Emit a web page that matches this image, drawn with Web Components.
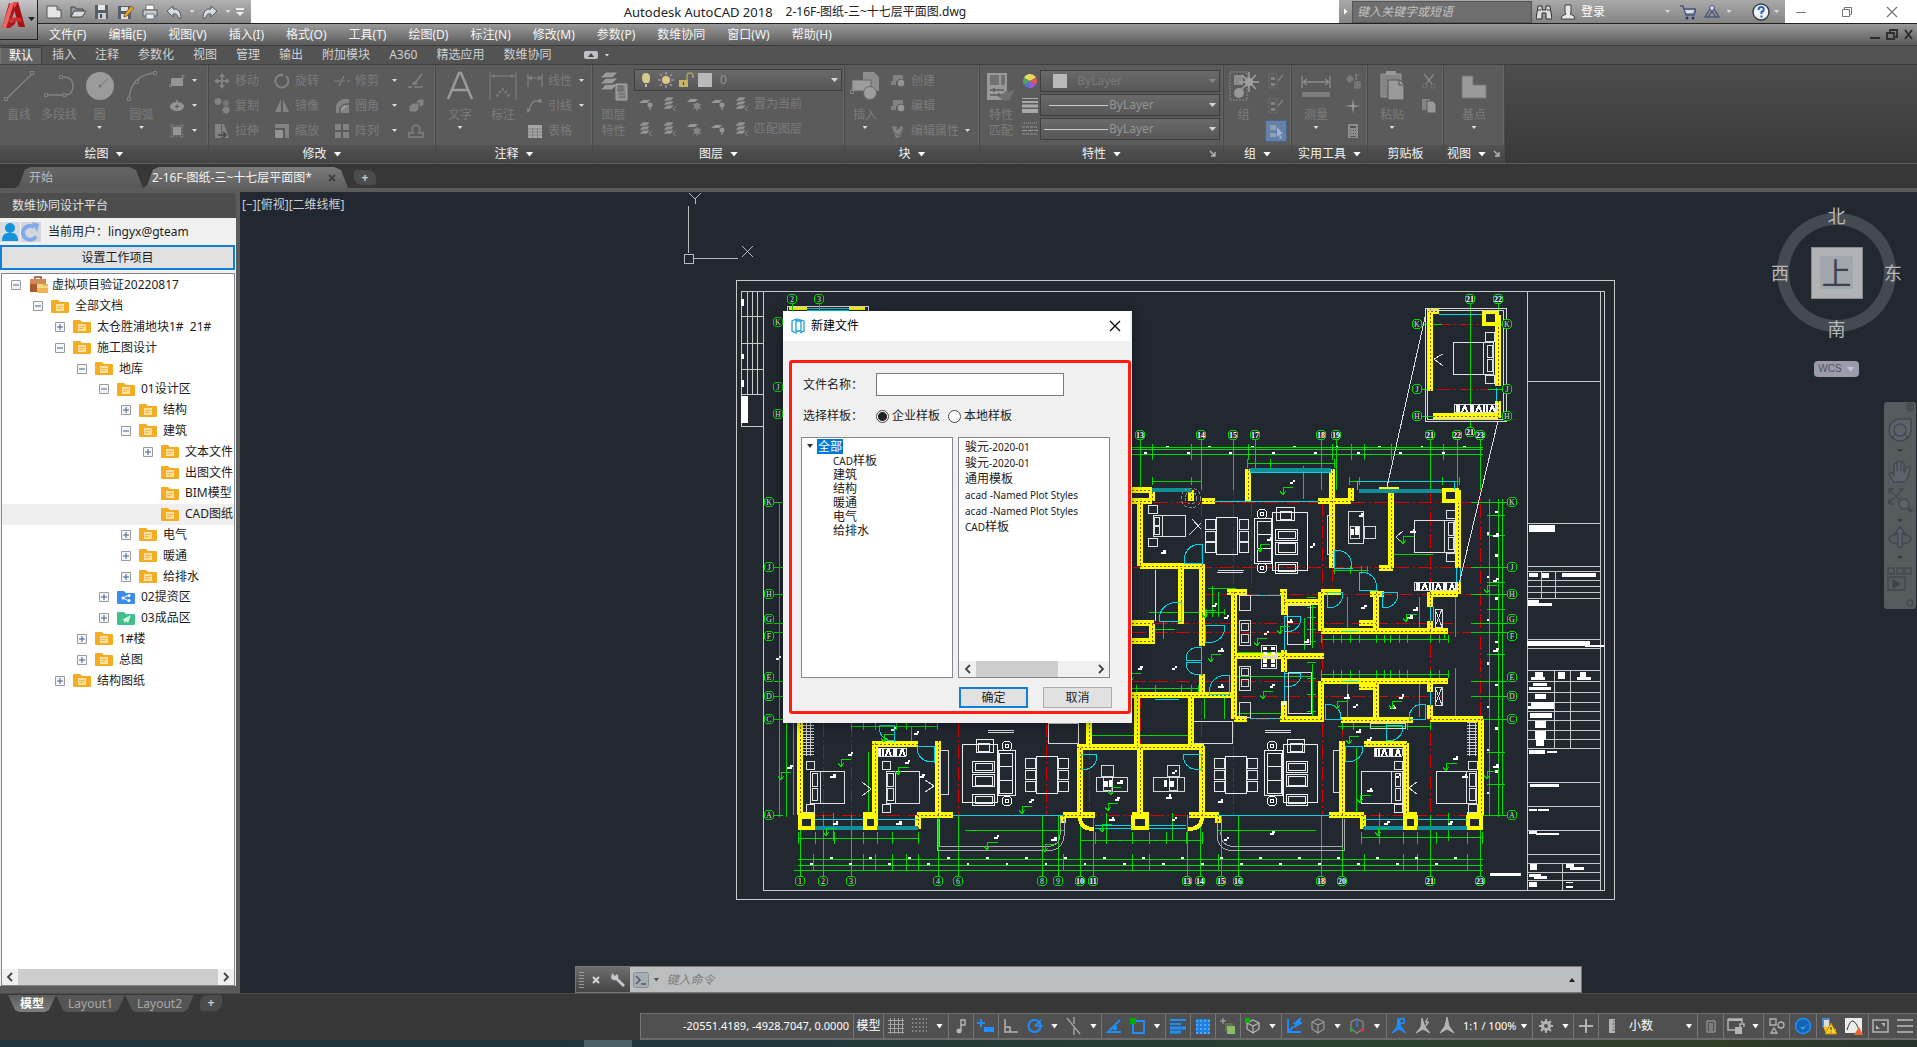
<!DOCTYPE html>
<html lang="zh-CN">
<head>
<meta charset="utf-8">
<title>Autodesk AutoCAD 2018</title>
<style>
html,body{margin:0;height:100%}
body{display:flex;flex-direction:column;height:100vh;overflow:hidden;background:#383838;color:#e4e4e4;
font:12px/16px "Noto Sans","Noto Sans CJK SC",sans-serif}
main{flex:1;min-height:0;display:flex}
</style>
</head>
<body>
<title-bar></title-bar>
<menu-bar></menu-bar>
<ribbon-bar></ribbon-bar>
<doc-tabs></doc-tabs>
<main>
<project-panel></project-panel>
<model-space>
<plan-drawing></plan-drawing>
<view-cube></view-cube>
<nav-bar></nav-bar>
<file-dialog heading="新建文件"></file-dialog>
<command-line></command-line>
</model-space>
</main>
<layout-tabs></layout-tabs>
<status-bar></status-bar>
<task-strip></task-strip>
<script>
const BASE = `*{box-sizing:border-box}
button,input,select{font:inherit;color:inherit;margin:0}
button{background:none;border:0;padding:0;display:flex;align-items:center;justify-content:center}
a{color:inherit;text-decoration:none}
ui-icon{flex:none}
.ar{width:5px;height:3px;background:#ddd;clip-path:polygon(0 0,100% 0,50% 100%);flex:none}
.AR{width:8px;height:5px;background:#fff;clip-path:polygon(0 0,100% 0,50% 100%);flex:none}`;
const define = (name, build) => customElements.define(name, class extends HTMLElement {
  constructor() { super(); this.attachShadow({ mode: 'open' }); }
  connectedCallback() { this.shadowRoot.innerHTML = build(this); }
});
const g = '#838383', b = '#1f8fff', w = '#b4b4b4';
const ICONS = {
  logo: [38, 39, `<path d="M9 3h9l-8 20 6-3-1 4-5 4H2z" fill="#b3171b"/><path d="M13 2h5l7 25h-7z" fill="#e04a48"/><path d="M18 2l7 25h-6L14 9z" fill="#a51216"/><path d="M6 18q9-1 15 0l1 4q-9-3-18 2z" fill="#cf2b2d"/><path d="M10 3h4L6 28H2z" fill="#e86a66"/><path d="M28 17h7l-3.500 4z" fill="#23272e"/>`],
  new: [16, 16, `<path d="M1 2h10l4 4v8H1z" fill="#e4e4e4" stroke="#555"/><path d="M11 2v4h4" fill="#aaa" stroke="#555"/>`],
  open: [16, 16, `<path d="M1 13V3h4l1 2h7v3" fill="#8f969c" stroke="#444"/><path d="M1 13l3-6h12l-4 6z" fill="#d7dbdf" stroke="#444"/>`],
  save: [16, 16, `<path d="M1 1h13v14H1z" fill="#555e6b"/><path d="M4 1h7v5H4z" fill="#e6e6e6"/><path d="M4 9h8v6H4z" fill="#ccc"/><path d="M6 10h2v4H6z" fill="#445"/>`],
  saveas: [16, 16, `<path d="M0 2h13v13H0z" fill="#555e6b"/><path d="M3 3h7v4H3zM3 10h7v5H3z" fill="#e0e0e0"/><path d="M6 11l7-9 3 2-7 8-3 1z" fill="#e5a52b" stroke="#6d4c12" stroke-width=".7"/>`],
  print: [16, 16, `<path d="M4 1h8v5H4z" fill="#fff" stroke="#777"/><path d="M1 6h14v6H1z" fill="#c9c9c9" stroke="#555"/><path d="M4 10h8v5H4z" fill="#dff1ff" stroke="#777"/>`],
  undo: [16, 16, `<path d="M1 7l6-5v3q8-1 8 9h-3q0-5-5-4v3z" fill="#d7dade" stroke="#505a66"/>`],
  redo: [16, 16, `<path d="M15 7L9 2v3Q1 4 1 14h3q0-5 5-4v3z" fill="#d7dade" stroke="#505a66"/>`],
  more: [10, 10, `<path d="M1 1h8v2H1zM1 5h8L5 9z" fill="#eee"/>`],
  bino: [16, 16, `<path d="M2 2h4v4h4V2h4l2 13h-6V9H6v6H0z" fill="#dcdcdc" stroke="#333"/><path d="M2 6h3M11 6h3" stroke="#333"/>`],
  person: [16, 16, `<path d="M5 1h6v6q0 3-1 3l4 2 1 3H1l1-3 4-2Q5 9 5 7z" fill="#e8e8e8" stroke="#444"/>`],
  cart: [16, 16, `<path d="M0 2h3l3 9h8l2-6H4" fill="none" stroke="#4a5580" stroke-width="1.500"/><path d="M5 6h9l-1 3H6z" fill="#d8def0"/><circle cx="7" cy="14" r="1.500" fill="#26366f"/><circle cx="13" cy="14" r="1.500" fill="#26366f"/>`],
  a360: [16, 16, `<circle cx="8" cy="4" r="2.500" fill="#dce" stroke="#4a5580"/><path d="M6 5L1 13h14L10 5M8 7l-4 6M8 7l4 6" fill="none" stroke="#4a5580" stroke-width="1.300"/>`],
  help: [18, 18, `<circle cx="9" cy="9" r="8" fill="#eef2fa" stroke="#3c4046" stroke-width="1.500"/><path d="M6.500 7q0-3 2.700-3t2.600 2.500Q11.800 8 9.500 9v2" fill="none" stroke="#2a5fc0" stroke-width="2"/><path d="M8.500 12.500h2v2h-2z" fill="#2a5fc0"/>`],
  min: [14, 14, `<path d="M2 7.500h10" stroke="#777"/>`],
  restore: [14, 14, `<path d="M2.500 4.500h7v7h-7zM4.500 4.500v-2h7v7h-2" fill="none" stroke="#777"/>`],
  close: [14, 14, `<path d="M2 2l10 10M12 2L2 12" stroke="currentColor" stroke-width="1.200"/>`],
  tabx: [8, 8, `<path d="M1 1l6 6M7 1L1 7" stroke="currentColor" stroke-width="1.800"/>`],
  mmin: [14, 14, `<path d="M2 9h10v2H2z" fill="#2e2e2e"/>`],
  mres: [14, 14, `<path d="M2 5h7v6H2zM5 4V2h7v7h-2" fill="none" stroke="#2e2e2e" stroke-width="1.800"/>`],
  mx: [14, 14, `<path d="M3 2l7 9M10 2L3 11" stroke="#2e2e2e" stroke-width="2"/>`],
  expand: [14, 8, `<rect width="14" height="8" rx="2" fill="#bdc1c7"/><path d="M4 6l3-4 3 4z" fill="#444"/>`],
  line: [30, 30, `<path d="M2 28L28 3" stroke="${g}" stroke-width="1.300"/><path d="M.5 26.500h3v3h-3zM26.500.5h3v3h-3z" fill="#5b5b5b" stroke="${g}"/>`],
  pline: [30, 30, `<path d="M2 24h20q7-1 7-9t-8-9h-4" fill="none" stroke="${g}" stroke-width="1.500"/><path d="M.5 22.500h3v3h-3zM19 22.500h3v3h-3zM15.500 4.500h3v3h-3z" fill="#5b5b5b" stroke="${g}"/>`],
  circle: [30, 30, `<circle cx="15" cy="15" r="14" fill="#9b9b9b"/><path d="M15 15l8-7" stroke="#777"/><circle cx="15" cy="15" r="1.500" fill="#777"/>`],
  arc: [30, 30, `<path d="M2 28Q4 4 28 2" fill="none" stroke="${g}" stroke-width="1.500"/><path d="M.5 26.500h3v3h-3zM8.500 9.500h3v3h-3zM26.500.5h3v3h-3z" fill="#5b5b5b" stroke="${g}"/>`],
  rect: [16, 16, `<path d="M2 5h12v8H2z" fill="#959595"/><path d="M.5 11.500h2v2h-2zM13 2.500h2v2h-2z" fill="none" stroke="${g}"/>`],
  ellipse: [16, 16, `<ellipse cx="8" cy="8.500" rx="7" ry="4.500" fill="#959595"/><path d="M6 8.500h4M8 6.500v4" stroke="#555"/><path d="M7 2h2v2H7z" fill="${g}"/>`],
  hatch: [16, 16, `<path d="M4 4h8v8H4z" fill="#959595"/><path d="M3 1v14M13 1v14M1 3h14M1 13h14" stroke="${g}" stroke-dasharray="2 1"/>`],
  move: [16, 16, `<path d="M8 0l3 4H9v3h3V5l4 3-4 3V9H9v3h2l-3 4-3-4h2V9H4v2L0 8l4-3v2h3V4H5z" fill="${g}"/>`],
  rotate: [16, 16, `<path d="M8 1.500a6.500 6.500 0 1 0 4 1.500" fill="none" stroke="${g}" stroke-width="2"/><path d="M7 0v4l3-2z" fill="${g}"/>`],
  trim: [16, 16, `<path d="M0 8h6M8 8h3M13 8h3M5 13l5-10" stroke="${g}" stroke-width="1.200"/>`],
  erase: [16, 16, `<path d="M0 14h4M6 14h9M14 1L7 10" stroke="${g}" stroke-width="1.500"/><path d="M8 8l-4 2 1 2 5-1z" fill="${g}"/>`],
  copy: [16, 16, `<circle cx="4" cy="3.500" r="3.500" fill="${g}"/><circle cx="12" cy="5" r="3" fill="#777"/><circle cx="12" cy="12" r="3.500" fill="${g}"/>`],
  mirror: [16, 16, `<path d="M7 1v13H1zM9 1v13h6z" fill="${g}"/>`],
  fillet: [16, 16, `<path d="M2 15V9q1-7 8-8h5v14z" fill="${g}"/><path d="M6 15V11q1-5 9-5" fill="#999" stroke="#5b5b5b" stroke-width="1.500"/>`],
  explode: [16, 16, `<path d="M1 8l4-3h6v6l-3 3H1zM8 4l3-3h5v6l-3 2" fill="${g}" stroke="#5b5b5b"/>`],
  stretch: [16, 16, `<path d="M1 1h6v14H1zM8 1h2l5 14H8z" fill="${g}"/><path d="M4 12h8M9 9l3 3-3 3" fill="none" stroke="#444" stroke-width="1.500"/>`],
  scale: [16, 16, `<path d="M1 1h14v14h-4V5H1z" fill="${g}"/><path d="M1 7h8v8H1z" fill="#959595"/>`],
  array: [16, 16, `<path d="M1 1h6v6H1zM9 1h6v6H9zM1 9h6v6H1zM9 9h6v6H9z" fill="${g}"/>`],
  offset: [16, 16, `<path d="M1 14h14v-4h-4q3-7-3-8-6 1-3 8H1z" fill="none" stroke="#787878" stroke-width="2"/>`],
  text: [30, 30, `<path d="M3 28L14 2h2l11 26M7 19h16" fill="none" stroke="#9a9a9a" stroke-width="2.500"/>`],
  dim: [30, 30, `<path d="M2 1v28M28 1v28M4 5h22" stroke="#787878" stroke-width="1.300"/><path d="M2 5l5-2v4zM28 5l-5-2v4z" fill="#787878"/><path d="M8 25l3-1M11 20l2 2M15 17v3M19 20l-2 2M22 25l-3-1" stroke="#787878" stroke-width="2"/>`],
  lin: [16, 16, `<path d="M1 1v13M15 1v13M2 5h12M5 3L2 5l3 2M11 3l3 2-3 2" fill="none" stroke="${g}" stroke-width="1.200"/>`],
  leader: [16, 16, `<path d="M1 14l4-9q1-2 4-2h3" fill="none" stroke="${g}" stroke-width="1.500"/><circle cx="13" cy="3" r="2" fill="${g}"/><path d="M0 15v-5l4 2z" fill="${g}"/>`],
  table: [16, 16, `<path d="M1 2h14v13H1z" fill="#a5a5a5"/><path d="M1 6h14M1 9h14M1 12h14M5.500 5v10M10.500 5v10" stroke="#777" stroke-width=".7"/>`],
  layers: [30, 30, `<path d="M7 1h12l-6 6H1zM7 7h12l-6 6H1zM7 13h12l-6 6H1z" fill="#9a9a9a" stroke="#5b5b5b"/><path d="M17 13h11v16H17z" fill="#8d8d8d" stroke="#aaa"/><path d="M19 15h5v5h-5zM20 23h6M20 26h6" fill="#777" stroke="#666"/>`],
  bulb: [16, 16, `<path d="M4 6q0-5 4-5t4 5-2 5H6Q4 9 4 6z" fill="#d8cb89"/><path d="M7 12h2v3H7z" fill="#bbb"/>`],
  sun: [16, 16, `<circle cx="8" cy="8" r="4" fill="#d8c88c"/><path d="M8 0v3M8 13v3M0 8h3M13 8h3M2 2l2 2M12 12l2 2M14 2l-2 2M4 12l-2 2" stroke="#999" stroke-width="1.500"/>`],
  lock: [16, 16, `<path d="M1 8h9v7H1z" fill="#c9b566"/><path d="M9 8V4q0-3 3-3t3 3v2" fill="none" stroke="#aaa266" stroke-width="1.500"/><path d="M5 10h1v3H5z" fill="#444"/>`],
  l1: [16, 16, `<path d="M5 4h7l-3 3H1z" fill="#999"/><circle cx="12" cy="9" r="2.500" fill="#959595"/><path d="M12 11v3" stroke="${g}" stroke-width="2"/>`],
  l2: [16, 16, `<path d="M5 1h7l-3 4H1zM5 5h7l-3 4H1zM5 9h7l-3 4H1z" fill="#949494" stroke="#5b5b5b" stroke-width=".6"/><path d="M14 10l-3 3 3 2" fill="none" stroke="${g}"/>`],
  l3: [16, 16, `<path d="M4 3h8L9 6H1z" fill="#999"/><circle cx="11" cy="10" r="3" fill="#8d8d8d"/><path d="M11 6v9M7 8l8 5M15 8l-8 5" stroke="${g}" stroke-width="1.200"/>`],
  insert: [30, 30, `<path d="M13 1h11l5 5v14H13z" fill="#8d8d8d"/><path d="M2 9h19v11H2z" fill="#9d9d9d" stroke="#666"/><circle cx="20" cy="22" r="6.500" fill="#9d9d9d" stroke="#666"/><path d="M.5 19.500h3v3h-3z" fill="none" stroke="${g}"/>`],
  blk: [16, 16, `<path d="M3 2h10v6H3zM1 8h5v4H1z" fill="${g}"/><circle cx="11" cy="10" r="4" fill="#959595" stroke="#5b5b5b"/>`],
  attr: [16, 16, `<path d="M2 3l5 1-1 3 3-1 1-3 4 2-4 9-4 1z" fill="${g}"/><path d="M5 10l4 3 5-9" stroke="#5b5b5b" fill="none"/>`],
  props: [30, 30, `<path d="M1 2h20v27H1z" fill="#999"/><path d="M4 4h9v10H4zM15 4h4v10h-4z" fill="#717171"/><path d="M4 19h14M4 24h14M8 17v4M13 22v4" stroke="#5c5c5c" stroke-width="1.500"/><path d="M13 26l8-7 2 2 6-3-5 11-6 1z" fill="#707070"/>`],
  wheel: [16, 16, `<path d="M8 8V1a7 7 0 0 1 6 3.500z" fill="#e8d65a"/><path d="M8 8l6-3.500a7 7 0 0 1 0 7z" fill="#e2584a"/><path d="M8 8l6 3.500A7 7 0 0 1 8 15z" fill="#9f5bd0"/><path d="M8 8v7a7 7 0 0 1-6-3.500z" fill="#4f73d8"/><path d="M8 8l-6 3.500a7 7 0 0 1 0-7z" fill="#52a94f"/><path d="M8 8L2 4.500A7 7 0 0 1 8 1z" fill="#dfe06a"/>`],
  lweight: [16, 16, `<path d="M0 1.500h16" stroke="#aaa"/><path d="M0 5h16" stroke="#aaa" stroke-width="2"/><path d="M0 9h16" stroke="#aaa" stroke-width="3"/><path d="M0 14h16" stroke="#aaa" stroke-width="4"/>`],
  ltype: [16, 16, `<path d="M0 2h16" stroke="#999" stroke-dasharray="1 1"/><path d="M0 6h16M0 13h16" stroke="#999" stroke-dasharray="3 1"/><path d="M0 9.500h16" stroke="#999" stroke-dasharray="5 1"/>`],
  group: [30, 30, `<path d="M1 1h17v28H1z" fill="none" stroke="#888" stroke-dasharray="2 1"/><path d="M5 4h9v10H5z" fill="#8c8c8c"/><circle cx="10" cy="22" r="5" fill="#999"/><path d="M20 1v20M10 11h20M13 4l14 14M27 4L13 18" stroke="#a0a0a0" stroke-width="1.500"/><circle cx="20" cy="11" r="4" fill="#a0a0a0"/>`],
  ung: [16, 16, `<path d="M1 1h8v14H1z" fill="none" stroke="#747474" stroke-dasharray="2 1"/><path d="M3 4h4v3H3zM3 10h4v3H3z" fill="${g}"/><path d="M15 2l-5 6" stroke="${g}" stroke-width="1.500"/>`],
  gsel: [20, 20, `<path d="M4 4h6v5H4zM4 12h6v4H4z" fill="#8f9fb8"/><path d="M11 6l6 7h-3l2 4-2 1-1-4-2 2z" fill="#a5b3c8"/>`],
  measure: [30, 30, `<path d="M1 5v12M29 5v12M2 11h26M6 8l-4 3 4 3M24 8l4 3-4 3" fill="none" stroke="#8c8c8c" stroke-width="1.300"/><path d="M1 21h28v5H1z" fill="#7d7d7d"/>`],
  qs: [16, 16, `<path d="M1 6h8M5 2v8M11 1v6M10 2h4M10 9h5v6h-5zM3 4h4v4H3zM10 12h5M12.500 9v6" fill="none" stroke="${g}" stroke-width="1.200"/>`],
  pt: [16, 16, `<path d="M8 0l1 7 7 1-7 1-1 7-1-7-7-1 7-1z" fill="#999"/>`],
  calc: [16, 16, `<path d="M3 1h10v14H3z" fill="#8d8d8d"/><path d="M5 3h6v2H5zM5 7h1v1H5zM8 7h1v1H8zM10 7h1v1h-1zM5 10h1v1H5zM8 10h1v1H8zM10 10h1v1h-1zM5 13h6v1H5z" fill="#555"/>`],
  paste: [30, 30, `<path d="M4 3h20v23H4z" fill="#858585" stroke="#999"/><path d="M9 0h10v4H9z" fill="#999"/><path d="M11 9h12l4 4v16H11z" fill="#9a9a9a" stroke="#555"/><path d="M22 9v5h5" fill="none" stroke="#555"/>`],
  cut: [16, 16, `<path d="M3 1l8 10M13 1L5 11" stroke="${g}" stroke-width="1.500"/><circle cx="4" cy="13" r="2" fill="none" stroke="#6c6c6c" stroke-width="1.500"/><circle cx="12" cy="13" r="2" fill="none" stroke="#6c6c6c" stroke-width="1.500"/>`],
  cpy: [16, 16, `<path d="M1 1h8v11H1z" fill="#858585"/><path d="M6 3h6l3 3v9H6z" fill="#999" stroke="#5b5b5b"/>`],
  base: [30, 30, `<path d="M3 5h11v9h13v13H3z" fill="#9a9a9a" stroke="#777"/>`],
  launch: [8, 8, `<path d="M1 1l4 4M6 2v4H2" fill="none" stroke="#bbb" stroke-width="1.300"/>`],
  user: [20, 20, `<path d="M0 0h20v20H0z" fill="#d9dcdf"/><circle cx="10" cy="6" r="5" fill="#1493da"/><path d="M2 19q0-8 6-8h4q6 0 6 8z" fill="#1493da"/>`],
  refresh: [20, 20, `<path d="M0 0h20v20H0z" fill="#d3d6da"/><path d="M15 14.500A7 7 0 1 1 13 5" fill="none" stroke="#7fa9ea" stroke-width="4"/><path d="M11 0l7 2-2 8z" fill="#7fa9ea"/>`],
  plus: [10, 10, `<path d="M.5.5h9v9h-9z" fill="#f6f6f6" stroke="#9a9a9a"/><path d="M2 5h6M5 2v6" stroke="#3f5f9f"/>`],
  minus: [10, 10, `<path d="M.5.5h9v9h-9z" fill="#f6f6f6" stroke="#9a9a9a"/><path d="M2 5h6" stroke="#3f5f9f"/>`],
  folder: [18, 15, `<path d="M0 2q0-1 1-1h6l2 2h8q1 0 1 1v9q0 1-1 1H1q-1 0-1-1z" fill="#f4ad22"/><path d="M5 5h8v7H5z" fill="#fbe0a2"/><path d="M6 7.500h6M6 9.500h4" stroke="#f4b943"/>`],
  share: [18, 15, `<path d="M0 2q0-1 1-1h6l2 2h8q1 0 1 1v9q0 1-1 1H1q-1 0-1-1z" fill="#3c8bef"/><path d="M12 5L6 8l6 3" fill="none" stroke="#fff"/><circle cx="6" cy="8" r="1.500" fill="#fff"/><circle cx="12" cy="5.500" r="1.500" fill="#fff"/><circle cx="12" cy="10.500" r="1.500" fill="#fff"/>`],
  send: [18, 15, `<path d="M0 2q0-1 1-1h6l2 2h8q1 0 1 1v9q0 1-1 1H1q-1 0-1-1z" fill="#42c08c"/><path d="M5 9l9-5-3 8-2-2-2 2V9z" fill="#d9f5e8"/>`],
  bag: [20, 18, `<path d="M6 3V1h6v2" fill="none" stroke="#8a4b27" stroke-width="1.500"/><path d="M1 3h16v13H1z" fill="#a8592e"/><path d="M1 3h16v5H1z" fill="#d48a55"/><path d="M8 8h11v9H8z" fill="#f0b452"/><path d="M8 8h5l1 2h5v2H8z" fill="#fbd78e"/>`],
  left: [8, 10, `<path d="M6 1L2 5l4 4" fill="none" stroke="#444" stroke-width="1.800"/>`],
  right: [8, 10, `<path d="M2 1l4 4-4 4" fill="none" stroke="#444" stroke-width="1.800"/>`],
  dlg: [14, 16, `<path d="M1 3l4-2v14l-4-2zM5 3h5v10H5M6 1l7 2v10l-4 2" fill="none" stroke="#19a0d8" stroke-width="1.300"/>`],
  wrench: [16, 16, `<path d="M2 1l3 3 2-2q2 2 1 4l7 7-2 2-7-7Q3 9 1 6z" fill="#c4c8cc"/>`],
  prompt: [16, 16, `<rect x=".5" y=".5" width="15" height="15" rx="2" fill="#a7adb4" stroke="#878d94"/><path d="M3 4l4 4-4 4M8 12h5" fill="none" stroke="#4e5a68" stroke-width="1.500"/>`],
  grid: [16, 16, `<path d="M2.500 0v16M6.500 0v16M10.500 0v16M14.500 0v16M0 2.500h16M0 6.500h16M0 10.500h16M0 14.500h16" stroke="#a5a5a5"/>`],
  dots: [16, 16, `<path d="M1 1h15M1 5h15M1 9h15M1 13h15" stroke="#999" stroke-width="1.500" stroke-dasharray="1.500 2"/>`],
  snap: [16, 16, `<path d="M8 13V2h4v5H8" fill="none" stroke="${w}" stroke-width="1.500"/><circle cx="6" cy="13" r="2.500" fill="${w}"/>`],
  dyn: [18, 16, `<path d="M4 1v8M0 5h8" stroke="${b}" stroke-width="2"/><path d="M7 9h10v5H7z" fill="${b}"/>`],
  ortho: [16, 16, `<path d="M2 1v13h13M2 9h5v5" fill="none" stroke="${w}" stroke-width="1.500"/>`],
  polar: [16, 16, `<circle cx="7.500" cy="8" r="6" fill="none" stroke="${b}" stroke-width="2"/><path d="M8 8l6-6M8 8h8" stroke="${b}" stroke-width="1.500"/>`],
  iso: [16, 18, `<path d="M1 1l13 16M8 11v7M8 7V0" stroke="#a0a0a0" stroke-width="1.500"/>`],
  angle: [16, 16, `<path d="M14 2L2 14h13" fill="none" stroke="${b}" stroke-width="2"/><path d="M7 8h4v4H7z" fill="${b}"/>`],
  osnap: [18, 18, `<path d="M4 4h11v12H4z" fill="none" stroke="${b}" stroke-width="1.800"/><path d="M1 1h6v6H1z" fill="#0a0"/>`],
  lw: [16, 16, `<path d="M0 2h16M0 6h11" stroke="${b}" stroke-width="2"/><path d="M0 10h16M0 14h11" stroke="${b}" stroke-width="3"/>`],
  tr: [16, 16, `<path d="M1 1h14v15H1z" fill="#1f7fdf"/><path d="M1 3h14M1 7h14M1 11h14M1 15h14" stroke="#55a5f5" stroke-width="2" stroke-dasharray="2 2"/>`],
  cyc: [16, 16, `<path d="M0 3h6M3 0v6" stroke="${w}"/><path d="M5 5h8v8H5z" fill="#58764a"/><path d="M7 8h8v8H7z" fill="#8dbb6c"/>`],
  cube: [16, 16, `<path d="M8 1l6 3v7l-6 4-6-4V4zM2 4l6 3 6-3M8 7v8" fill="none" stroke="#999" stroke-width="1.200"/>`],
  cubeg: [16, 16, `<path d="M8 2l6 3v6l-6 4-6-4V5zM2 5l6 3 6-3M8 8v7" fill="none" stroke="${w}" stroke-width="1.300"/><path d="M0 0h5v5H0z" fill="#0b0"/>`],
  ducs: [16, 16, `<path d="M2 1v13h13M2 14l5-5M8 9l3-4H9l5-4-1 4h2z" fill="none" stroke="${b}" stroke-width="1.800"/>`],
  giz: [16, 16, `<path d="M8 1l6 3v7l-6 4-6-4V4z" fill="none" stroke="#888" stroke-width="1.300"/><path d="M8 9V1" stroke="#3977e6" stroke-width="1.500"/><path d="M12 11l3 2" stroke="#d33" stroke-width="3"/><path d="M4 11l-3 2" stroke="#3a3" stroke-width="3"/>`],
  ann: [18, 18, `<path d="M8 1l3 9 5 6-7-4-7 4 5-6z" fill="${b}" stroke="${b}"/><circle cx="12" cy="4" r="2.500" fill="none" stroke="${b}" stroke-width="1.500"/>`],
  ann2: [16, 18, `<path d="M7 1l3 9 5 6-7-4-7 4 5-6zM13 1l-3 4h4l-4 5" fill="${w}" stroke="${w}"/>`],
  ann3: [16, 18, `<path d="M8 0l2 9 5 7-7-4-7 4 5-7z" fill="${w}" stroke="${w}"/>`],
  gear: [16, 16, `<circle cx="8" cy="8" r="3.500" fill="none" stroke="${w}" stroke-width="3"/><path d="M8 1v3M8 12v3M1 8h3M12 8h3M3 3l2 2M11 11l2 2M13 3l-2 2M5 11l-2 2" stroke="${w}" stroke-width="2"/>`],
  cross: [16, 16, `<path d="M8 1v14M1 8h14" stroke="${w}" stroke-width="2"/>`],
  ruler: [8, 16, `<path d="M1 1h6v14H1z" fill="${w}"/><path d="M5 3h2M4 6h3M5 9h2M4 12h3" stroke="#666"/>`],
  qp: [16, 16, `<path d="M4 3h8v11H4z" fill="none" stroke="#aaa"/><path d="M6 6h4M6 8h4M6 10h4M6 12h4" stroke="#aaa"/>`],
  uil: [18, 18, `<path d="M1 2h14v4M1 2v11h7" fill="none" stroke="${w}" stroke-width="1.500"/><path d="M1 2h14v2H1z" fill="${w}"/><path d="M8 10h7v7H8z" fill="${w}"/><path d="M13 10V7h4v3" fill="none" stroke="${w}" stroke-width="1.500"/>`],
  isol: [16, 16, `<path d="M1 1h6v6H1zM5 10l3 5H2z" fill="none" stroke="${w}" stroke-width="1.300"/><circle cx="12" cy="7" r="3" fill="none" stroke="${w}" stroke-width="1.300"/>`],
  hw: [18, 18, `<circle cx="9" cy="9" r="7.500" fill="#1464b4" stroke="${b}" stroke-width="1.500"/><path d="M6 10l3 3 5-6-4 3z" fill="#3f9cf0"/>`],
  warn1: [18, 18, `<path d="M2 1h8v9H2z" fill="#4b86c9"/><path d="M4 3h5v7H4z" fill="#ddd"/><path d="M3 9l13 3v5H6z" fill="#f5c518"/><path d="M11 6l6 11H5z" fill="#ffd52e" stroke="#b98500"/><path d="M11 10v3M11 14.500v1" stroke="#222"/>`],
  warn2: [20, 18, `<path d="M1 1h17v15H1z" fill="#ececec"/><path d="M3 13Q6 3 9 4t6 9" fill="none" stroke="#333"/><path d="M15 10l4 8h-9z" fill="#e8652b"/>`],
  full: [18, 16, `<path d="M1 2h15v12H1z" fill="none" stroke="${w}" stroke-width="1.500"/><path d="M4 11V7l4 4zM13 5v4L9 5z" fill="${w}"/>`],
  menu: [16, 16, `<path d="M0 2h16M0 8h16M0 14h16" stroke="#bbb" stroke-width="1.500"/>`],
};
define('ui-icon', el => {
  const [W, H, p] = ICONS[el.getAttribute('name')];
  return `<style>:host{display:block;width:${W}px;height:${H}px}svg{display:block}</style><svg width="${W}" height="${H}" viewBox="0 0 ${W} ${H}" aria-hidden="true">${p}</svg>`;
});
const I = n => `<ui-icon name="${n}"></ui-icon>`;
const AR = '<i class="ar"></i>';

define('title-bar', () => `<style>${BASE}
:host{display:flex;height:23px;background:#fff;color:#222;position:relative}
.app{position:absolute;left:0;top:0;width:38px;height:40px;background:linear-gradient(#c6c6c6,#777);border-right:1px solid #222;border-bottom:1px solid #222;z-index:2}
.qa{display:flex;align-items:center;margin-left:38px;width:213px;padding-left:4px;background:linear-gradient(#b2b2b2,#858585)}
.qa button{width:24px;height:22px;flex:none}.qa .n{width:12px}
.title{flex:1;display:flex;gap:13px;align-items:center;justify-content:center}
.title span:first-child{font-size:13px}
.help{display:flex;align-items:center;width:446px;background:linear-gradient(#a9a9a9,#858585);color:#fff}
.help button{flex:none}
.help>.n{width:13px}.help>.n i{width:4px;height:7px;clip-path:polygon(0 0,100% 50%,0 100%);background:#fff}
input{width:180px;height:22px;border:1px solid #555;background:#6e6e6e;padding:0 4px;font-style:italic;outline:0}
input::placeholder{color:#c4c4c4}
.sys{display:flex;width:132px;justify-content:space-between;padding:0 18px 0 9px;color:#777}
</style>
<button class="app" aria-label="应用程序菜单">${I('logo')}</button>
<div class="qa">${['new','open','save','saveas','print','undo'].map(n => `<button aria-label="${n}">${I(n)}</button>`).join('')}<button class="n" aria-label="undo list">${AR}</button><button aria-label="redo">${I('redo')}</button><button class="n" aria-label="redo list">${AR}</button><button class="n" aria-label="customize">${I('more')}</button></div>
<div class="title"><span>Autodesk AutoCAD 2018</span><span>2-16F-图纸-三~十七层平面图.dwg</span></div>
<div class="help"><button class="n" aria-label="收起"><i></i></button><input placeholder="键入关键字或短语" aria-label="搜索">
<button style="width:24px" aria-label="搜索">${I('bino')}</button><button style="width:24px" aria-label="账户">${I('person')}</button><button style="width:26px">登录</button><button style="width:72px;justify-content:flex-end;padding-right:8px" aria-label="登录菜单">${AR}</button><button style="width:20px" aria-label="cart">${I('cart')}</button><button style="width:28px" aria-label="A360">${I('a360')}</button><button style="width:6px" aria-label="A360 menu">${AR}</button><button style="width:42px;justify-content:flex-end;padding-right:4px" aria-label="help">${I('help')}</button>${AR}</div>
<div class="sys"><button aria-label="最小化">${I('min')}</button><button aria-label="还原">${I('restore')}</button><button aria-label="关闭">${I('close')}</button></div>`);

define('menu-bar', () => `<style>${BASE}
:host{display:block;border-top:1px solid #222;border-bottom:1px solid #3a3a3a;background:linear-gradient(#9a9a9a,#5a5a5a)}
nav{display:flex;height:21px;align-items:center;gap:22px;padding:1px 1px 0 49px;color:#f4f4f4}
.g{display:flex;margin-left:auto;gap:3px}</style>
<nav>${'文件(F),编辑(E),视图(V),插入(I),格式(O),工具(T),绘图(D),标注(N),修改(M),参数(P),数维协同,窗口(W),帮助(H)'.split(',').map(t => `<a href="#">${t}</a>`).join('')}
<div class="g"><button aria-label="min">${I('mmin')}</button><button aria-label="restore">${I('mres')}</button><button aria-label="close">${I('mx')}</button></div></nav>`);

define('ribbon-panel', el => `<style>${BASE}
:host{display:flex;flex-direction:column;flex:none;height:98px;background:#5b5b5b;border-right:1px solid #484848;box-shadow:inset -1px 0 #666}
.c{display:flex;height:80px}
footer{position:relative;height:18px;background:linear-gradient(#525252,#454545);display:flex;gap:7px;align-items:center;justify-content:center;color:#f2f2f2}
.far{position:absolute;right:6px;top:5px}</style>
<div class="c"><slot></slot></div><footer><span>${el.getAttribute('label')}</span>${el.hasAttribute('plain') ? '' : '<i class="AR"></i>'}${el.hasAttribute('launch') ? `<span class="${el.getAttribute('launch')}">${I('launch')}</span>` : ''}</footer>`);
define('big-tool', el => `<style>${BASE}
:host{display:block;flex:none}
button{width:100%;flex-direction:column;justify-content:flex-start;padding-top:6px;color:#7b7b7b;white-space:pre}
span{margin-top:6px}.ar{margin-top:3px}</style>
<button>${I(el.getAttribute('icon'))}<span>${el.getAttribute('label').replace('|', '\n')}</span>${el.hasAttribute('menu') ? AR : ''}</button>`);
define('small-tool', el => `<style>${BASE}
:host{display:flex;height:25px;color:#7b7b7b}
button{justify-content:flex-start;white-space:nowrap}
.i{width:26px;display:flex;justify-content:center;flex:none}.m{flex:1;display:flex;justify-content:flex-end;padding-right:6px}</style>
<button aria-label="${el.getAttribute('label') || el.getAttribute('icon')}"><span class="i">${I(el.getAttribute('icon'))}</span>${el.getAttribute('label') || ''}</button>${el.hasAttribute('menu') ? `<button class="m" aria-label="menu">${AR}</button>` : ''}`);
const big = (i, l, W, m) => `<big-tool icon="${i}" label="${l}" style="width:${W}px"${m ? ' menu' : ''}></big-tool>`;
const col = (W, ...r) => `<div class="col" style="width:${W}px">${r.map(([i, l, m]) => `<small-tool icon="${i}" label="${l || ''}"${m ? ' menu' : ''}></small-tool>`).join('')}</div>`;
define('ribbon-bar', () => `<style>${BASE}
:host{display:block}
.tabs{display:flex;height:19px;align-items:flex-end;background:#535353;border-bottom:1px solid #3e3e3e;color:#d0d0d0}
.tabs a{padding:0 9px 1px 10px}.tabs a.on{background:#646464;border:1px solid #3e3e3e;border-bottom:0;border-left-color:#777;padding:0 8px;color:#fff;border-radius:2px 2px 0 0}
.tabs button{align-self:center;margin-left:24px;gap:6px}
.row{display:flex;height:99px;background:linear-gradient(#4d4d4d,#393939);border-bottom:1px solid #5c5c5c}
.col{padding-top:3px;flex:none}
.lay{padding-top:4px}.sel{position:relative;display:flex;align-items:center;height:22px;border:1px solid #3f3f3f;background:linear-gradient(#6a6a6a,#575757);color:#949494;width:208px}
select{appearance:none;background:none;border:0;outline:0;flex:1;height:20px;padding:0 0 0 4px;color:inherit}
.sel .AR{background:#d8d8d8;margin-right:3px;width:7px;height:4px}
.sw{width:14px;height:14px;background:#b9b9b9;flex:none}
.ics{display:flex;height:25px;align-items:center;color:#7b7b7b}.ics span{width:24px;display:flex;justify-content:center}
.props{display:flex;flex-direction:column;gap:2px;padding-top:5px}.props .r{display:flex;align-items:center}.props .r>ui-icon{margin-right:2px}.props .sel{width:180px}
hr{margin:0;border:0;height:1px;background:#ccc;flex:none}
.hl{background:#6581aa;border:1px solid #4c648a;width:22px;height:22px;margin:2px 0 0 2px}
</style>
<div class="tabs"><a class="on" href="#">默认</a>${'插入,注释,参数化,视图,管理,输出,附加模块,A360,精选应用,数维协同'.split(',').map(t => `<a href="#">${t}</a>`).join('')}<button aria-label="最小化">${I('expand')}${AR}</button></div>
<div class="row">
<ribbon-panel label="绘图" style="width:209px">${big('line','直线',38)}${big('pline','多段线',42)}${big('circle','圆',39,1)}${big('arc','圆弧',45,1)}${col(39,['rect','',1],['ellipse','',1],['hatch','',1])}</ribbon-panel>
<ribbon-panel label="修改" style="width:227px">${col(60,['move','移动'],['copy','复制'],['stretch','拉伸'])}${col(60,['rotate','旋转'],['mirror','镜像'],['scale','缩放'])}${col(74,['trim','修剪',1],['fillet','圆角',1],['array','阵列',1])}${col(26,['erase'],['explode'],['offset'])}</ribbon-panel>
<ribbon-panel label="注释" style="width:157px">${big('text','文字',48,1)}${big('dim','标注',38)}${col(68,['lin','线性',1],['leader','引线',1],['table','表格'])}</ribbon-panel>
<ribbon-panel label="图层" style="width:252px">${big('layers','图层|特性',41)}
<div class="lay"><div class="sel" style="padding-left:3px;gap:4px">${I('bulb')}${I('sun')}${I('lock')}<i class="sw"></i><select aria-label="图层"><option>0</option></select><i class="AR"></i></div>
<div class="ics"><span>${I('l1')}</span><span>${I('l2')}</span><span>${I('l3')}</span><span>${I('l1')}</span><span>${I('l2')}</span>置为当前</div>
<div class="ics"><span>${I('l2')}</span><span>${I('l2')}</span><span>${I('l3')}</span><span>${I('l1')}</span><span>${I('l2')}</span>匹配图层</div></div></ribbon-panel>
<ribbon-panel label="块" style="width:135px">${big('insert','插入',40,1)}${col(91,['blk','创建'],['blk','编辑'],['attr','编辑属性',1])}</ribbon-panel>
<ribbon-panel label="特性" launch="far" style="width:244px">${big('props','特性|匹配',42)}
<div class="props"><div class="r">${I('wheel')}<div class="sel" style="padding-left:12px;color:#7a7a7a"><i class="sw"></i><select aria-label="颜色"><option>&nbsp; ByLayer</option></select><i class="AR" style="background:#888"></i></div></div>
<div class="r">${I('lweight')}<div class="sel" style="padding-left:8px"><hr style="width:59px"><select aria-label="线宽" style="padding-left:1px"><option>ByLayer</option></select><i class="AR"></i></div></div>
<div class="r">${I('ltype')}<div class="sel" style="padding-left:3px"><hr style="width:64px"><select aria-label="线型" style="padding-left:1px"><option>ByLayer</option></select><i class="AR"></i></div></div></div></ribbon-panel>
<ribbon-panel label="组" style="width:68px">${big('group','组',39)}<div class="col">${['ung','ung'].map(n => `<small-tool icon="${n}"></small-tool>`).join('')}<button class="hl" aria-label="组选择">${I('gsel')}</button></div></ribbon-panel>
<ribbon-panel label="实用工具" style="width:76px">${big('measure','测量',48,1)}${col(26,['qs'],['pt'],['calc'])}</ribbon-panel>
<ribbon-panel label="剪贴板" plain style="width:76px">${big('paste','粘贴',48,1)}${col(26,['cut'],['cpy'])}</ribbon-panel>
<ribbon-panel label="视图" launch="near" style="width:61px">${big('base','基点',60,1)}</ribbon-panel>
</div>`);

define('doc-tabs', () => `<style>${BASE}
:host{display:flex;height:28px;padding:4px 0 0 15px;background:#373737;border-bottom:4px solid #5b5b5b;align-items:flex-end;box-sizing:border-box}
.t{height:21px;display:flex;align-items:center;background:linear-gradient(#666,#585858);color:#b9b9b9;clip-path:polygon(0 100%,4px 88%,10px 12%,16px 0,calc(100% - 14px) 0,calc(100% - 7px) 14%,100% 100%)}
.t.on{background:linear-gradient(#7b7b7b,#5f5f5f);color:#f2f2f2}
.p{width:22px;height:15px;margin:0 0 3px 6px;background:#4c4c4c;border-radius:2px 8px 3px 8px;color:#ccc;font-weight:bold}</style>
<a class="t" href="#" style="width:128px;padding-left:14px">开始</a>
<div class="t on" style="width:205px;padding-left:9px;gap:16px"><a href="#">2-16F-图纸-三~十七层平面图*</a><button aria-label="关闭" style="color:#404040">${I('tabx')}</button></div>
<button class="p" aria-label="新建">+</button>`);

const TREE = [[0,'-','bag','虚拟项目验证20220817'],[1,'-','folder','全部文档'],[2,'+','folder','太仓胜浦地块1#&nbsp; 21#'],[2,'-','folder','施工图设计'],[3,'-','folder','地库'],[4,'-','folder','01设计区'],[5,'+','folder','结构'],[5,'-','folder','建筑'],[6,'+','folder','文本文件'],[6,'','folder','出图文件'],[6,'','folder','BIM模型'],[6,'','folder','CAD图纸'],[5,'+','folder','电气'],[5,'+','folder','暖通'],[5,'+','folder','给排水'],[4,'+','share','02提资区'],[4,'+','send','03成品区'],[3,'+','folder','1#楼'],[3,'+','folder','总图'],[2,'+','folder','结构图纸']];
define('project-panel', () => `<style>${BASE}
:host{display:flex;flex-direction:column;width:240px;flex:none;background:#5b5b5b;padding-bottom:7px}
h2{margin:1px 4px 0 0;height:25px;padding-left:12px;font:inherit;line-height:25px;background:#4d4d4d;color:#e2e2e2;border-radius:0 4px 0 0}
.b{flex:1;min-height:0;display:flex;flex-direction:column;background:#f0f0f0;color:#1c1c1c;margin-right:4px}
.u{display:flex;height:27px;align-items:center;gap:1px}.u span{margin-left:6px}
.set{height:25px;border:2px solid #0f7fda;background:#e1e1e1;margin-right:1px}
.tree{flex:1;min-height:0;margin:3px 1px 0 1px;border:1px solid #828790;background:#fff;display:flex;flex-direction:column;justify-content:space-between;overflow:hidden}
ul{margin:1px 0 0;padding:0;list-style:none;height:416px;display:grid;grid-auto-rows:1fr}
li{display:flex;align-items:center;white-space:nowrap;padding-left:calc(9px + var(--d)*22px)}
li.on{background:#efefef}.e{width:18px;flex:none}li>ui-icon{margin-right:6px}li>ui-icon[name=bag]{margin-right:3px}
.sb{display:flex;height:16px;background:#f0f0f0;align-items:stretch}.sb button{width:16px}.sb i{flex:1;background:#cdcdcd}</style>
<h2>数维协同设计平台</h2><div class="b"><div class="u">${I('user')}${I('refresh')}<span>当前用户：lingyx@gteam</span></div>
<button class="set">设置工作项目</button>
<div class="tree"><ul>${TREE.map(([d, e, i, t]) => `<li style="--d:${d}"${t === 'CAD图纸' ? ' class="on"' : ''}><span class="e">${e ? I(e === '+' ? 'plus' : 'minus') : ''}</span>${I(i)}<span>${t}</span></li>`).join('')}</ul>
<div class="sb"><button aria-label="左">${I('left')}</button><i></i><button aria-label="右">${I('right')}</button></div></div></div>`);

define('model-space', () => `<style>:host{display:block;flex:1;min-width:0;position:relative;overflow:hidden;background:#212830}
.v{position:absolute;left:2px;top:5px;color:#cfcfcf}
::slotted(view-cube){position:absolute;right:12px;top:9px}
::slotted(nav-bar){position:absolute;right:1px;top:210px}
::slotted(file-dialog){position:absolute;left:543px;top:119px}
::slotted(command-line){position:absolute;left:20%;right:20%;bottom:0}</style>
<slot></slot><span class="v">[−][俯视][二维线框]</span>`);

/* The floor plan is described in sheet units; X and Y map them to canvas pixels. */
define('plan-drawing', () => {
  const X = v => Math.round(v / 1.742) + 490, Y = v => Math.round(v / 2.45) + 78;
  const N = s => s.trim().split(/\s+/).map(t => t.split(',').map(Number));
  const seg = s => N(s).map(([a, c, d, e]) => `M${X(a)} ${Y(c)}L${X(d)} ${Y(e)}`).join('');
  const path = (s, st, wd = 1, extra = '') => `<path d="${seg(s)}" stroke="${st}" stroke-width="${wd}" fill="none" ${extra}/>`;
  const box = s => N(s).map(([x, y, W, H]) => `M${X(x)} ${Y(y)}H${X(x + W)}V${Y(y + H)}H${X(x)}Z`).join('');
  const rects = (s, st = '#d8d8d8') => `<path d="${box(s)}" fill="none" stroke="${st}"/>`;
  const fills = (s, c = '#fff') => `<path d="${box(s)}" fill="${c}"/>`;
  let o = '';
  o += rects('10,25,1530,1517 57,51,1465,1467 20,51,37,332', '#c9c9c9');
  o += path('1388,51,1388,1518 1515,51,1515,1518 30,51,30,305 38,51,38,305 47,51,47,305 20,113,57,113 20,178,57,178 20,243,57,243 20,305,57,305 1412,738,1412,804 1438,738,1438,804 1436,981,1436,1172 1464,981,1464,1172 1450,1452,1450,1518', '#c9c9c9');
  o += path([273,621,724,738,760,773,788,804,905,927,981,1008,1035,1058,1080,1103,1126,1149,1172,1254,1312,1371,1430,1452,1475,1494].map(y => `1388,${y},1515,${y}`).join(' '), '#c9c9c9');
  o += fills('20,308,12,68 20,72,5,15 20,205,5,12 20,270,5,16 1392,625,46,16 1392,742,16,10 1415,742,12,12 1450,742,58,10 1390,808,20,14 1390,816,42,8 1388,910,110,12 1490,918,32,6 1402,986,14,18 1396,996,24,8 1443,986,12,16 1480,986,12,14 1476,996,24,8 1398,1012,26,8 1392,1022,38,8 1402,1038,20,14 1396,1058,40,12 1390,1068,46,8 1394,1085,38,12 1402,1106,20,16 1402,1130,20,22 1404,1152,14,14 1392,1176,28,9 1424,1178,16,6 1394,1259,50,8 1392,1320,14,6 1408,1320,18,6 1392,1374,14,8 1404,1379,40,6 1394,1456,12,14 1456,1456,14,10 1464,1462,24,8 1392,1480,20,6 1400,1485,24,6 1392,1499,14,12 1456,1499,12,4 1456,1508,12,6 1324,1477,54,8');
  /* axis lines */
  const red = 'shape-rendering="crispEdges" stroke-dasharray="14 3 2 3"';
  o += path('700,569,1310,569 700,727,1310,727 822,794,1310,794 700,865,1260,865 700,886,1310,886 700,1008,1250,1008 700,1044,1240,1044 878,1100,1310,1100 118,1335,1310,1335 162,1110,162,1335 210,1110,210,1335 397,1110,397,1400 551,1110,551,1335 122,1110,122,1335 606,1110,606,1335 625,1110,625,1335 714,1042,714,1335 820,570,820,1335 877,520,877,1335 907,570,907,790 1031,570,1031,1335 1049,730,1049,790 1066,1110,1066,1335 1219,540,1219,1335 1306,520,1306,1335 1289,110,1289,360 1232,133,1320,133 1232,291,1320,291', '#d40000', 1, red);
  o += path('705,735,705,860 712,735,712,860 719,735,719,860 726,735,726,860 733,735,733,860', '#7b1010');
  /* dimensions */
  const G = '#00d800';
  o += path('700,434,1312,434 700,439,1312,439 700,452,1312,452 900,474,1052,474 1078,516,1270,516 735,516,820,516 118,1443,1312,1443 118,1457,1312,1457 112,1470,1312,1470 118,1392,328,1392 609,1396,822,1396 1100,1388,1310,1388 1030,905,1250,905 1030,990,1250,990 1323,562,1323,1335 1337,562,1337,1340 1345,562,1345,1335 85,569,85,1340 98,1110,98,1340 110,1110,110,1335 825,1042,825,1100 210,1118,360,1118 1060,1118,1219,1118 730,838,860,838 1000,852,1000,930 1013,820,1013,925 1013,965,1013,1095 850,790,850,850 240,1180,240,1335 1090,1170,1090,1335 880,995,1015,995 625,1140,803,1140 410,1372,582,1372 850,1372,1020,1372 700,1025,815,1025 832,780,882,780 840,775,840,850 1050,735,1110,735 1075,800,1075,880 1200,800,1200,880 1075,1012,1075,1095 1200,1012,1200,1095 885,935,960,935 885,1085,960,1085 740,880,775,880 755,860,755,905 316,1118,316,1162 1155,695,1225,695 998,480,998,560 180,1330,180,1400 1130,1330,1130,1400 1250,1330,1250,1400 655,1330,655,1400 770,1330,770,1400 1243,890,1243,905 1263,800,1263,900 1263,975,1263,1095 860,1045,860,1100', G);
  o += path([122,162,210,362,397,543,572,609,632,796,819,855,885,1030,1066,1219,1306].map(x => `${x},1335,${x},1488`).join(' ') + ' ' + [714,820,877,914,1030,1056,1219,1267,1306].map(x => `${x},416,${x},${x === 914 ? 490 : 540}`).join(' ') + ' 1289,82,1289,390 1337,82,1337,110', G);
  o += path([569,727,794,865,886,1008,1044,1100,1335].map(y => `1290,${y},1355,${y} 76,${y},92,${y}`).join(' ') + ' 1205,133,1240,133 1205,291,1225,291 1205,357,1225,357 1320,133,1346,133 1320,291,1346,291 1320,357,1346,357', G);
  let t = '';
  for (const [y, xs, h] of [[1450, [122,145,162,232,252,282,306,328,362,397,543,580,609,632,700,730,796,819,850,885,1030,1066,1105,1173,1197,1219,1283,1306], 20], [446, [714,735,803,820,877,903,914,1030,1049,1082,1105,1151,1219,1242,1267,1306], 20], [905, [1030,1050,1065,1080,1095,1125,1140,1150,1165,1180,1219,1235,1250], 10], [990, [1030,1050,1065,1080,1095,1125,1140,1150,1165,1180,1219,1235,1250], 10], [1392, [118,148,182,232,256,282,328,609,635,655,700,730,760,795,822,1100,1130,1173,1197,1230,1283,1310], 14], [516, [735,803,820,1078,1095,1240,1270], 10], [474, [900,914,940,1030,1052], 10], [1025, [708,740,785,803,815], 8], [1118, [210,232,252,290,306,340,360,1066,1085,1143,1180,1219], 8], [735, [1052,1080,1100,1110], 10], [838, [740,785,830,860], 8]])
    for (const x of xs) t += `${x},${y - h},${x},${y + h} `;
  for (const y of [569,600,650,727,765,794,830,865,886,940,1008,1044,1100,1180,1260,1335]) t += `1318,${y},1350,${y} `;
  for (const y of [800,825,850,880,910,960,1000,1040,1080]) t += `1005,${y},1020,${y} `;
  o += path(t, G);
  /* walls */
  const walls = `1219,95,1219,297 1214,101,1235,101 1338,110,1338,285 1338,322,1338,362 1225,357,1338,357 700,567,735,567 735,535,735,567 700,540,735,540 714,570,714,725 714,725,822,725 822,567,845,567 822,720,822,870 785,730,785,868 700,865,738,865 735,868,735,912 700,908,740,908 822,870,822,920 822,990,822,1040 700,1042,875,1042 803,540,803,567 903,487,903,567 1049,487,1049,730 1025,567,1082,567 1082,535,1082,567 1130,540,1165,540 1151,540,1151,730 1130,730,1155,730 1268,538,1268,730 1268,765,1268,795 1219,794,1268,794 1115,794,1140,794 865,790,900,790 878,790,878,870 878,870,878,1100 965,787,965,845 958,790,970,790 965,813,1030,813 1030,790,1030,885 1030,790,1065,790 1030,885,1250,885 1125,790,1125,885 1095,865,1125,865 1219,790,1219,825 1219,860,1219,885 878,945,1035,945 965,930,965,985 965,1055,965,1100 958,1100,1035,1100 878,1100,900,1100 1030,1008,1030,1105 1030,1008,1250,1008 1125,1012,1125,1100 1095,1022,1125,1022 1065,1103,1190,1103 1219,1008,1219,1035 1219,1065,1219,1100 1219,1100,1312,1100 1308,1100,1308,1335 122,1110,122,1335 252,1160,252,1335 248,1162,328,1162 362,1155,362,1335 325,1335,388,1335 232,1335,256,1335 328,1335,328,1370 118,1335,148,1335 609,1170,609,1335 605,1168,826,1168 714,1170,714,1335 822,1165,822,1340 625,1110,625,1165 709,1045,709,1165 803,1045,803,1165 580,1335,635,1335 580,1335,580,1355 700,1335,730,1335 800,1335,852,1335 850,1335,850,1355 1066,1155,1066,1335 1043,1335,1105,1335 1105,1162,1180,1162 1177,1160,1177,1335 1103,1335,1103,1370 1173,1335,1197,1335 1283,1335,1312,1335`;
  o += path(walls, '#ffff00', 6);
  o += path(walls, '#8a5a10', 1, 'stroke-dasharray="2 2"');
  o += `<path d="${box('1314,104,22,28 1244,540,22,26 122,1341,22,26 236,1341,18,26 702,1341,24,26 1175,1341,20,26 1286,1341,22,26')}" fill="none" stroke="#ff0" stroke-width="4"/>`;
  o += `<path d="M${X(609)} ${Y(1340)}q0 12 14 12M${X(822)} ${Y(1340)}q0 12 -14 12" fill="none" stroke="#ff0" stroke-width="4"/>`;
  /* windows */
  const C = '#00d7e6';
  o += path('1235,98,1310,98 1235,107,1310,107 905,487,1047,487 905,495,1047,495 735,535,803,535 735,542,803,542 1095,537,1240,537 1095,545,1240,545 1093,516,1262,516 1093,516,1093,540 1262,516,1262,540 845,567,1025,567 1265,730,1265,765 1271,730,1271,765 388,1335,580,1335 850,1335,1043,1335 1335,290,1335,320 905,797,960,797 965,850,965,930 965,985,965,1055 1065,885,1095,885 1065,1008,1095,1008 1219,825,1219,860 1219,1035,1219,1065 1225,825,1225,860 905,1097,960,1097 740,1050,783,1050 635,1367,700,1367 730,1367,795,1367 635,1360,700,1360 730,1360,795,1360', C);
  o += path('905,491,1047,491 735,538,803,538 1095,541,1240,541 148,1366,232,1366 256,1366,328,1366 1105,1366,1173,1366 1197,1366,1283,1366', '#12909a', 4);
  o += path('148,1344,232,1344 256,1344,328,1344 1105,1344,1173,1344 1197,1344,1283,1344 965,850,965,930 965,985,965,1055', C);
  const door = (x, y, dx, dy) => `<path d="M${X(x)} ${Y(y)}h${dx}q0 ${dy} ${-dx} ${dy}z" fill="none" stroke="${C}"/>`;
  for (const d of [[822,717,-18,-19],[785,860,-22,-19],[1052,730,18,-18],[1095,785,18,-18],[1040,790,16,16],[1135,790,16,16],[828,870,20,18],[820,955,-15,-13],[820,960,-15,13],[870,1040,-20,-19],[965,847,17,16],[965,987,17,14],[1037,1100,16,-15],[1210,1100,-16,-15],[285,1115,-15,16],[1143,1115,17,16],[355,1167,-17,16],[1072,1167,18,16],[612,1185,16,16],[820,1185,-18,16]]) o += door(...d);
  /* furniture */
  const dining = (x, y) => rects(`${x},${y},37,92 ${x-19},${y+6},17,24 ${x-19},${y+34},17,24 ${x-19},${y+62},17,24 ${x+39},${y+6},17,24 ${x+39},${y+34},17,24 ${x+39},${y+62},17,24`, '#e8e8e8');
  o += dining(847,605) + dining(862,1190) + dining(533,1190);
  const sofa = (ox, oy, m) => {
    const q = (x, y, W, H) => `${m ? ox - (x - 927) - W : ox + x - 927},${oy + y},${W},${H}`;
    const c = y => `<circle cx="${X(ox)}" cy="${Y(oy + y)}" r="5" fill="none" stroke="#fff"/><circle cx="${X(ox)}" cy="${Y(oy + y)}" r="2" fill="none" stroke="#fff"/>`;
    return rects([q(945,592,60,143),q(913,608,30,110),q(918,614,24,32),q(918,646,24,34),q(918,680,24,32),q(950,635,38,26),q(954,639,30,18),q(950,666,38,30),q(954,670,30,22),q(952,580,30,32),q(958,590,20,20),q(950,716,38,26),q(954,720,30,18)].join(' '), '#eee') + c(597) + c(731);
  };
  o += sofa(927, 0) + sofa(945, 569) + sofa(483, 569, 1);
  const bed = (x, y, W, H, l) => rects(`${x},${y},${W},${H} ${l ? x + 2 : x + W - 12},${y+6},10,${H/2-8} ${l ? x + 2 : x + W - 12},${y+H/2+2},10,${H/2-8} ${l ? x - 8 : x + W - 14},${y-24},15,20 ${l ? x - 8 : x + W - 14},${y+H+4},15,20`, '#e0e0e0') + path(`${l ? x+16 : x+W-18},${y},${l ? x+16 : x+W-18},${y+H}`, '#ddd');
  o += bed(1260,177,70,77) + bed(736,600,56,52,1) + bed(1192,612,70,78) + bed(140,1227,58,78,1) + bed(272,1227,58,78,1) + bed(1100,1227,70,78) + bed(1230,1227,70,78);
  o += rects('637,1242,55,35 650,1242,15,32 646,1213,22,26 736,1242,55,35 764,1242,15,32 761,1213,22,26 1077,590,25,78 1080,628,16,28 1105,627,18,30 1040,600,10,95 1050,1175,15,103 365,1175,15,110 887,797,18,35 887,858,18,60 890,866,12,16 890,892,12,20 887,970,18,60 890,976,12,16 890,1002,12,18 887,1058,18,36 925,918,27,28 925,948,27,28 970,820,40,96 972,985,40,100 1228,830,12,44 1228,1022,12,44 1115,1110,60,12 554,1110,52,50 806,1105,68,55 1210,92,142,277 1215,97,132,267 100,88,140,14');
  o += fills('650,1252,8,14 660,1250,5,16 765,1252,8,14 756,1250,5,16 1081,634,6,16 1089,630,6,20 928,924,8,8 942,924,8,8 928,936,8,8 942,936,8,8 928,954,8,8 942,954,8,8 928,965,8,8 942,965,8,8');
  o += path('1228,830,1240,874 1240,830,1228,874 1228,1022,1240,1066 1240,1022,1228,1066 1212,105,1145,532 1337,369,1270,770 850,735,895,735 848,740,893,740 450,1127,495,1127 450,1133,495,1133 932,1127,977,1127 932,1133,977,1133 800,650,820,620 820,635,804,610 1160,655,1172,640 1160,655,1172,672 1226,218,1242,205 1226,218,1242,234 230,1255,245,1272 245,1272,230,1288 340,1250,355,1265 355,1265,340,1280 1182,1270,1197,1255 1182,1270,1197,1285 740,735,740,860', '#ddd');
  const robe = (x, y, n) => path(`${x},${y},${x + n * 12},${y} ${x},${y},${x},${y + 20} ${x + n * 12},${y},${x + n * 12},${y + 20} ${x},${y + 20},${x + n * 12},${y + 20}`, '#ddd') + path(Array.from({length: n}, (_, i) => i % 2 ? `${x + i * 12 + 2},${y + 20},${x + i * 12 + 6},${y + 2} ${x + i * 12 + 6},${y + 2},${x + i * 12 + 10},${y + 20}` : `${x + i * 12 + 4},${y + 2},${x + i * 12 + 4},${y + 20} ${x + i * 12 + 8},${y + 2},${x + i * 12 + 8},${y + 20}`).join(' '), '#fff', 2);
  o += robe(1262,328,6) + robe(1192,764,6) + robe(258,1170,4) + robe(1122,1170,4);
  o += path(Array.from({length: 12}, (_, i) => `1283,${1108+i*7},1302,${1108+i*7} 127,${1108+i*7},146,${1108+i*7}`).join(' ') + ' 1288,1108,1288,1190 1297,1108,1297,1190 132,1108,132,1190 140,1108,140,1190', '#ccc');
  for (const k of [0, 4]) o += `<path d="M${X(360)+k/2} ${Y(1345)}V${Y(1420)-k}H${X(562)-k/2}q10 -2 ${X(582)-X(562)-k/2} -14V${Y(1345)}M${X(1070)-k/2} ${Y(1345)}V${Y(1420)-k}H${X(868)+k/2}q-10 -2 ${X(848)-X(868)+k/2} -14V${Y(1345)}" fill="none" stroke="#aaa"/>`;
  o += `<g stroke="#888" fill="none" stroke-dasharray="3 2"><circle cx="${X(803)}" cy="${Y(558)}" r="10"/><circle cx="${X(803)}" cy="${Y(558)}" r="6"/></g>`;
  /* room notes with leaders */
  const notes = N('975,520 1095,600 1185,640 1010,675 935,660 750,690 840,820 860,850 970,860 1100,825 1190,830 1180,850 930,890 1000,910 850,930 770,975 710,975 850,1020 940,1020 960,1060 1070,1045 1085,1068 1165,1045 1150,1070 280,1125 320,1135 1090,1130 1110,1150 205,1185 175,1240 305,1205 330,1240 675,1255 770,1230 670,1295 760,1290 520,1300 850,1300 1110,1275 1160,1240 1260,1195 1275,1240 460,1390 940,1380 560,1395 860,1395 180,1355 290,1355 1140,1355 1250,1355 660,1345 770,1345 100,1218 1330,650 1330,760 1330,930 1330,1215 80,950');
  o += fills(notes.map(([x, y], i) => `${x},${y},${6 + i % 3 * 2},5 ${x + 5},${y - 5},4,5`).join(' '));
  o += notes.filter((_, i) => i % 2 < 1).map(([x, y]) => `<path d="M${X(x + 6)} ${Y(y + 12)}H${X(x - 12)}v6m-3 -2l3 4 3 -4" fill="none" stroke="#00d800"/>`).join('');
  o += fills(Array.from({length: 34}, (_, i) => `${140 + i * 34},${i % 2 ? 1437 : 1452},5,5`).join(' ') + ' ' + Array.from({length: 16}, (_, i) => `${722 + i * 37},${i % 2 ? 430 : 446},5,4`).join(' ') + ' ' + Array.from({length: 14}, (_, i) => `${i % 2 ? 1318 : 1333},${590 + i * 53},4,6`).join(' '));
  /* top-left fragment behind the dialog */
  o += fills('103,90,32,9 207,90,28,9', '#ff0') + path('135,93,207,93 135,98,207,98', C) + path('108,82,108,100 155,82,155,100', G);
  /* grid bubbles */
  const bubble = (x, y, s) => `<circle cx="${X(x)}" cy="${Y(y)}" r="5" fill="#212830" stroke="#00d800"/><text x="${X(x)}" y="${Y(y) + 3}"${s > 9 ? ' class="b"' : ''}>${s}</text>`;
  const rowB = (y, s) => s.split(' ').map(p => { const [x, n] = p.split(':'); return bubble(+x, y, n); }).join('');
  o += rowB(1498, '122:1 162:2 210:3 362:4 397:6 543:8 572:9 609:10 632:11 796:13 819:14 855:15 885:16 1030:18 1066:20 1219:21 1306:23');
  o += rowB(405, '714:13 820:14 877:15 914:17 1030:18 1056:19 1219:21 1267:22 1306:23') + rowB(72, '108:2 155:3 1289:21 1337:22') + bubble(1289, 397, '21');
  for (const [n, y] of [['K',569],['J',727],['H',794],['G',855],['F',896],['E',998],['D',1044],['C',1100],['A',1335]]) o += bubble(68, y, n) + bubble(1363, y, n);
  for (const [n, y] of [['K',132],['J',291],['H',357]]) o += bubble(83, y - 4, n) + bubble(1197, y, n) + bubble(1353, y, n);
  /* user coordinate system marker */
  o += `<g stroke="#b9b9b9" fill="none"><path d="M448 14V61M453 66H498M444 62h9v9h-9zM502 54l11 11M513 54l-11 11M449 1l6 6 6-6M455 7v5"/></g>`;
  return `<style>:host{display:block}svg{display:block}text{font:8px "Liberation Serif",serif;fill:#b8e8b8;text-anchor:middle}.b{font-weight:bold;fill:#fff}</style><svg width="1677" height="801" viewBox="0 0 1677 801" role="img" aria-label="plan" shape-rendering="crispEdges">${o}</svg>`;
});

define('view-cube', () => `<style>${BASE}
:host{display:grid;width:137px;justify-items:center;color:#b9b9b9}
.c{display:grid;grid-template:30px 83px 30px/24px 89px 24px;place-items:center;font-size:18px;line-height:20px;background:radial-gradient(circle at 50% 50%,transparent 47px,#434a52 48px,#434a52 59px,transparent 60px);justify-content:center}
button.t{grid-column:2;width:52px;height:52px;background:#b1b2b4;border:1px solid #8a8b8d;color:#39414a;font-size:30px}
.t span{background:#a0a6ab;width:33px;height:33px;line-height:33px}
.w{margin-top:17px;width:45px;height:16px;border-radius:4px;background:#9a9cab;color:#50525e;font:10px/16px "Liberation Sans",sans-serif;gap:5px}
.w .AR{background:#c4c6d2}</style>
<div class="c"><span></span><span>北</span><span></span><span>西</span><button class="t"><span>上</span></button><span>东</span><span></span><span>南</span><span></span></div>
<button class="w">WCS<i class="AR"></i></button>`);

define('nav-bar', () => `<style>:host{display:block;width:32px;height:207px;background:#565b5d;border-radius:3px}svg{display:block}</style>
<svg width="32" height="207" viewBox="0 0 32 207" fill="none" stroke="#42484f" stroke-width="1.300" role="img" aria-label="导航">
<circle cx="26" cy="5" r="3.500"/><path d="M24 3l4 4M28 3l-4 4"/>
<path d="M16 17h11v11a11 11 0 1 1-11-11z" fill="#5c636c"/><circle cx="16" cy="28" r="6"/><path d="M12 32l-5 4M20 32l5 4"/>
<path d="M13 47h6l-3 3zM13 117h6l-3 3zM13 154h6l-3 3z" fill="#353a3f" stroke="none"/>
<path d="M10 80l-5-8q2-3 5 1V62q2-2 3 0v7-9q2-2 4 0v9-8q2-2 3 0v10l3-6q3-1 3 1-1 8-5 14z" fill="#5c636c"/>
<path d="M5 87l15 15M19 87L5 101M5 87v5M5 87h5M20 87h-5M5 102h5M5 102v-5"/><circle cx="20" cy="102" r="5" fill="#5c636c"/><path d="M24 106l4 4" stroke-width="3"/>
<ellipse cx="16" cy="137" rx="11" ry="5"/><path d="M14 145v-14h-3l5-6 5 6h-3v14z" fill="#5c636c"/>
<path d="M4 166h6v6H4zM13 166h6v6h-6zM21 166h6v6h-6zM4 175h17v13H4z"/><path d="M9 178l7 4-7 4z" fill="#3c4248"/>
<circle cx="26" cy="201" r="3"/></svg>`);

const mix = s => s.replace(/[A-Za-z0-9 -]+/g, m => `<small>${m}</small>`);
define('file-dialog', el => `<style>${BASE}
:host{display:block;width:349px;background:#f0f0f0;color:#222;padding-bottom:9px;box-shadow:0 2px 12px #0006}
header{display:flex;align-items:center;height:30px;margin-right:2px;background:#fff;padding:0 8px;gap:6px;color:#000}
header button{margin-left:auto;color:#000}
h2{margin:0;font:inherit}
form{margin:19px 1px 0 6px;border:3px solid #ff1d12;border-radius:3px;padding:10px 17px 3px 9px;display:flex;flex-direction:column}
.f{display:flex;align-items:center;height:23px;padding-left:2px}
.f>label:first-child{width:73px}
.f input[type=text]{width:188px;height:23px;border:1px solid #7a7a7a;background:#fff;padding:0 4px}
.rr{height:20px;margin-top:10px;display:flex;align-items:center;padding-left:2px}
.rr .k{width:73px}
.rr label{display:flex;align-items:center;gap:3px;margin-right:8px}
input[type=radio]{appearance:none;width:13px;height:13px;border:1px solid #444;border-radius:50%;background:#fff}
input[type=radio]:checked{background:radial-gradient(circle,#222 4px,#fff 5px)}
.ls{display:flex;gap:5px;margin-top:11px;height:241px}
.l{width:152px;border:1px solid #828790;background:#fff;display:flex;flex-direction:column;line-height:16px}
ul{margin:0;padding:0;list-style:none}small{font-size:10px}
.a{padding:0 0 0 5px}.a li{height:14px;line-height:14px;padding-left:26px;white-space:nowrap}
.a li.s{display:flex;align-items:center;gap:4px;height:16px;padding:0}.s b{font-weight:normal;background:#0078d7;color:#fff;padding:0 1px;line-height:15px}
.s .ar{background:#333;width:6px;height:4px}
.b{padding:1px 0 0 6px;flex:1}
.sb{display:flex;height:16px;background:#f0f0f0}.sb button{width:17px}.sb i{width:82px;background:#cdcdcd;margin-right:auto}
.bt{display:flex;justify-content:flex-end;gap:15px;margin:9px -1px 0 0}
.bt button{width:69px;height:21px;background:#e1e1e1;border:1px solid #adadad}.bt .ok{border:2px solid #0f7fda}
</style>
<header>${I('dlg')}<h2>${el.getAttribute('heading')}</h2><button aria-label="关闭">${I('close')}</button></header>
<form onsubmit="return false"><div class="f"><label for="n">文件名称：</label><input id="n" type="text"></div>
<div class="rr"><span class="k">选择样板：</span><label><input type="radio" name="t" checked>企业样板</label><label><input type="radio" name="t">本地样板</label></div>
<div class="ls"><div class="l"><ul class="a"><li class="s"><i class="ar"></i><b>全部</b></li>${'CAD样板,建筑,结构,暖通,电气,给排水'.split(',').map(t => `<li>${mix(t)}</li>`).join('')}</ul></div>
<div class="l"><ul class="b">${'骏元-2020-01,骏元-2020-01,通用模板,acad -Named Plot Styles,acad -Named Plot Styles,CAD样板'.split(',').map(t => `<li>${mix(t)}</li>`).join('')}</ul><div class="sb"><button type="button" aria-label="左">${I('left')}</button><i></i><button type="button" aria-label="右">${I('right')}</button></div></div></div>
<div class="bt"><button class="ok">确定</button><button type="button">取消</button></div></form>`);

define('command-line', () => `<style>${BASE}
:host{display:flex;height:27px;background:#bcbdbf;border:1px solid #777;color:#3a3a3a;box-sizing:border-box}
.h{display:flex;width:54px;background:linear-gradient(#6e6e6e,#444);color:#ddd;align-items:center;gap:8px;padding-left:3px}
.h i{width:5px;height:16px;background:repeating-linear-gradient(#999 0 1px,transparent 1px 3px)}
.h .x{margin-right:2px}
input{flex:1;border:0;outline:0;background:none;font-style:italic;padding:0 0 0 7px}input::placeholder{color:#7b7b7b}
.p{gap:4px;margin-left:3px}.ar{background:#555;width:6px;height:4px}.u{width:18px}.u .ar{transform:rotate(180deg);background:#222}</style>
<div class="h"><i></i><button class="x" aria-label="关闭">${I('tabx')}</button><button aria-label="自定义">${I('wrench')}</button></div>
<button class="p" aria-label="最近命令">${I('prompt')}${AR}</button><input placeholder="键入命令" aria-label="命令"><button class="u" aria-label="历史">${AR}</button>`);

define('layout-tabs', () => `<style>${BASE}
:host{display:flex;height:20px;box-sizing:border-box;border-top:1px solid #4d4d4d;padding:1px 0 0 8px;color:#a8a8a8}
a{height:17px;line-height:17px;padding:0 12px;background:#555;clip-path:polygon(0 0,100% 0,calc(100% - 7px) 88%,calc(100% - 11px) 100%,11px 100%,7px 88%)}
a.on{background:linear-gradient(#5c5c5c,#7d7d7d);color:#fff;font-weight:bold}
.p{width:22px;height:16px;margin-left:6px;background:#4c4c4c;border-radius:8px 2px 8px 3px;font-weight:bold;color:#ccc}</style>
<a class="on" href="#">模型</a><a href="#">Layout1</a><a href="#">Layout2</a><button class="p" aria-label="新布局">+</button>`);

/* [icon or text, slot width, divider on the left] */
const ST = [['grid',24,1],['dots',24],['',17],['snap',25,1],['dyn',25,1],['ortho',25,1],['polar',24],['',15],['iso',24],['',15],['angle',25,1],['osnap',23],['',16],['lw',25,1],['tr',25,1],['cyc',25,1],['cubeg',24,1],['',17],['ducs',25,1],['cube',24],['',15],['giz',23],['',18],['ann',25,1],['ann2',24],['ann3',24],['=1:1 / 100%',57],['',16],['gear',26,1],['',15],['cross',25,1],['ruler',27,1],['=小数',56],['',16],['qp',26,1],['uil',25,1],['',15],['isol',26,1],['hw',27,1],['warn1',24,1],['warn2',28],['full',25,1],['menu',24]];
define('status-bar', () => `<style>${BASE}
:host{display:flex;justify-content:flex-end;height:27px;color:#fff}
.s{display:flex;background:#505050;border-top:1px solid #6e6e6e;border-left:1px solid #777;border-bottom:2px solid #6a6a6a}
.s>*{flex:none;height:100%;white-space:nowrap}.d{border-left:1px solid #767676}
.xyz{width:212px;display:flex;align-items:center;justify-content:flex-end;padding-right:4px;font-size:11px}.m{width:30px}
.t{justify-content:flex-start;padding-left:4px}.ar{width:7px;height:5px;background:#fff}</style>
<div class="s"><span class="xyz">-20551.4189, -4928.7047, 0.0000</span><button class="m d">模型</button>${ST.map(([n, W, d]) => `<button style="width:${W}px${n.startsWith('=1') ? ';font-size:11px' : ''}" class="${d ? 'd' : ''} ${n[0] === '=' ? 't' : ''}"${n[0] === '=' ? '' : ` aria-label="${n || 'menu'}"`}>${n === '' ? AR : n[0] === '=' ? n.slice(1) : I(n)}</button>`).join('')}</div>`);
define('task-strip', () => `<style>:host{display:block;height:7px;background:linear-gradient(90deg,#1e353d,#21363a 40%,#2a402f 70%,#303c26 90%,#26332c)}
i{display:block;height:7px;width:48px;margin-left:584px;background:#4b6165}</style><i></i>`);
</script>
</body>
</html>
